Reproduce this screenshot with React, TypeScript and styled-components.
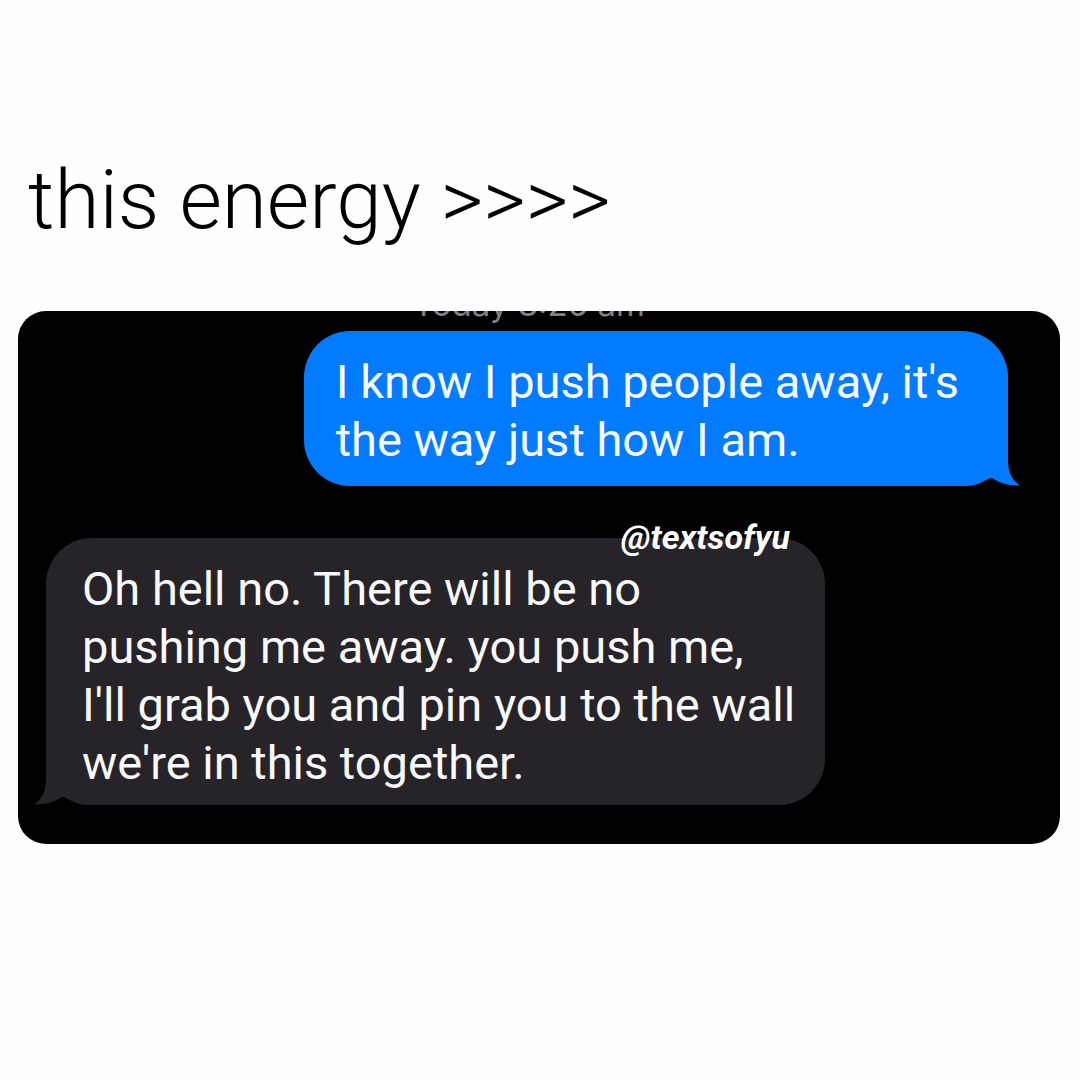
import React from "react";
import styled, { createGlobalStyle } from "styled-components";

const BLUE = "#027bff";
const GREY = "#262429";

const GlobalStyle = createGlobalStyle`
  *, *::before, *::after { box-sizing: border-box; }
  body { margin: 0; background: #fefefe; }
`;

const Post = styled.main`
  padding: 150px 20px 0 18px;
`;

const Caption = styled.h1`
  margin: 0 0 61px;
  padding-left: 10px;
  font: 300 82px/100px Roboto, sans-serif;
  color: #000;
`;

const Chat = styled.section`
  position: relative;
  display: flex;
  flex-direction: column;
  gap: 52px;
  padding: 20px 52px 39px 28px;
  border-radius: 28px;
  overflow: hidden;
  background: #000;
`;

const Timestamp = styled.time`
  position: absolute;
  top: -27px;
  left: 0;
  right: 20px;
  font: 400 33px/40px Inter, "Liberation Sans", sans-serif;
  color: #828285;
  text-align: center;
  white-space: nowrap;
`;

const Bubble = styled.div<{ $sent?: boolean }>`
  position: relative;
  align-self: ${(p) => (p.$sent ? "flex-end" : "flex-start")};
  padding: ${(p) => (p.$sent ? "22px 49px 17px 32px" : "22px 30px 13px 36px")};
  border-radius: 46px;
  background: ${(p) => (p.$sent ? BLUE : GREY)};
  color: #f8f9fc;
`;

const Message = styled.p`
  position: relative;
  margin: 0;
  font: 400 47px/58px Roboto, "Liberation Sans", sans-serif;
  white-space: nowrap;
`;

const Tail = styled.svg<{ $sent?: boolean }>`
  position: absolute;
  bottom: 0;
  ${(p) => (p.$sent ? "right: -12px;" : "left: -12px; transform: scaleX(-1);")}
  width: 56px;
  height: 46px;
  fill: ${(p) => (p.$sent ? BLUE : GREY)};
`;

const Handle = styled.a`
  position: absolute;
  top: 206px;
  left: 603px;
  font: italic 700 34px/40px Roboto, sans-serif;
  color: #fff;
  text-decoration: none;
`;

const BubbleTail = ({ sent }: { sent?: boolean }) => (
  <Tail $sent={sent} viewBox="0 0 56 46" aria-hidden="true">
    <path d="M44 0V20C44 32 48 40 56 45.5C44 46 34 42 29 38.5Q27 37.5 25 38.5C17 43 11 46 0 46V0Z" />
  </Tail>
);

export default function App() {
  return (
    <>
      <GlobalStyle />
      <Post>
        <Caption>this energy &gt;&gt;&gt;&gt;</Caption>
        <Chat>
          <Timestamp>Today 8:26 am</Timestamp>
          <Bubble $sent>
            <BubbleTail sent />
            <Message>
              I know I push people away, it's
              <br />
              the way just how I am.
            </Message>
          </Bubble>
          <Bubble>
            <BubbleTail />
            <Message>
              Oh hell no. There will be no
              <br />
              pushing me away. you push me,
              <br />
              I'll grab you and pin you to the wall
              <br />
              we're in this together.
            </Message>
          </Bubble>
          <Handle href="#textsofyu">@textsofyu</Handle>
        </Chat>
      </Post>
    </>
  );
}
